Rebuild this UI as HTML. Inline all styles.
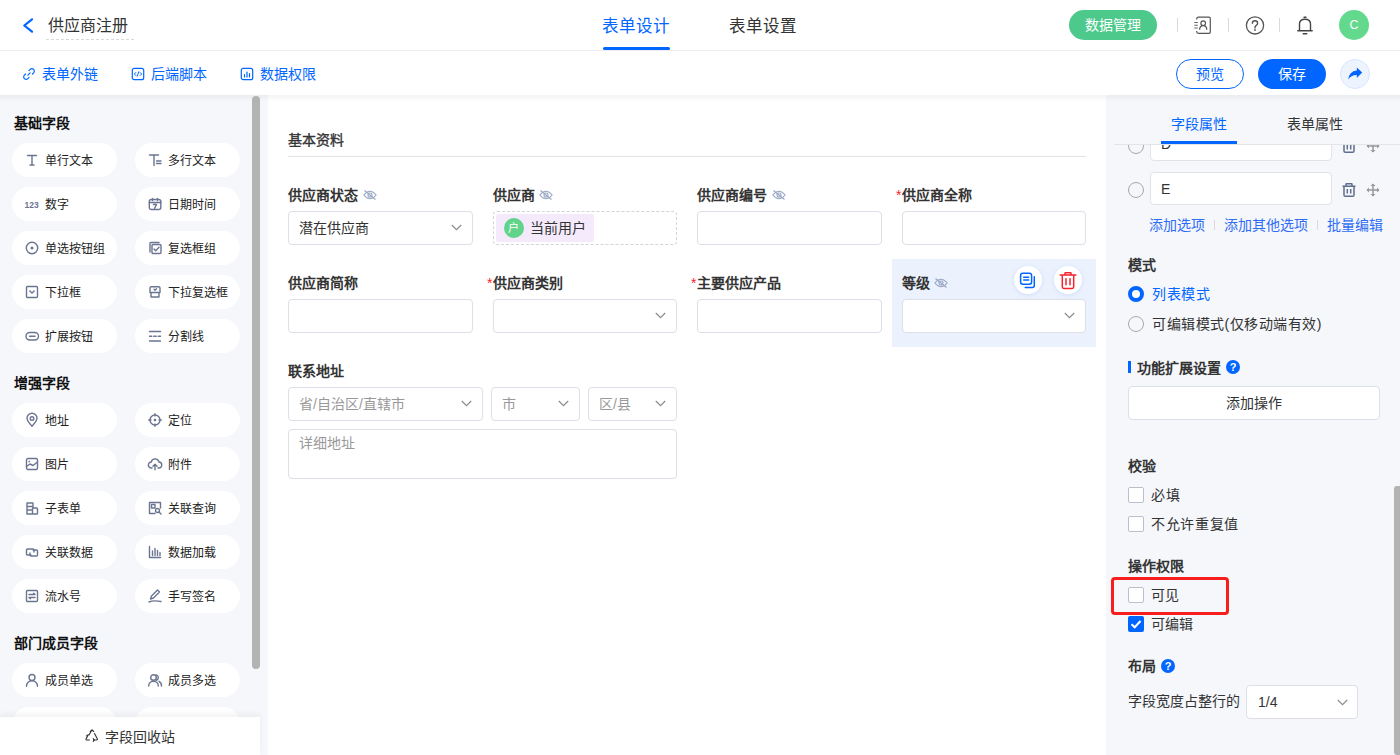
<!DOCTYPE html>
<html lang="zh-CN">
<head>
<meta charset="utf-8">
<style>
*{margin:0;padding:0;box-sizing:border-box}
html,body{width:1400px;height:755px;overflow:hidden;background:#fff}
body{font-family:"Liberation Sans",sans-serif;font-size:14px;color:#333;position:relative}
.a{position:absolute}
.t{position:absolute;white-space:nowrap;line-height:20px}
svg{position:absolute;overflow:visible}
/* header */
#hdr{left:0;top:0;width:1400px;height:51px;border-bottom:1px solid #ececec}
#tb{left:0;top:51px;width:1400px;height:44px;background:#fff}
#lp{left:0;top:95px;width:268px;height:660px;background:#f5f7fb}
#cv{left:268px;top:95px;width:838px;height:660px;background:#fff}
#rp{left:1106px;top:95px;width:294px;height:660px;background:#f5f7fb}
#shadow{left:0;top:95px;width:1400px;height:7px;background:linear-gradient(rgba(0,0,0,0.045),rgba(0,0,0,0))}
.pill{position:absolute;width:105px;height:34px;border-radius:17px;background:#fff}
.pt{font-size:12px;color:#222}
.sec{position:absolute;left:14px;font-size:14px;font-weight:bold;color:#111;line-height:20px}
.lbl{position:absolute;font-size:14px;font-weight:bold;color:#333;line-height:20px;white-space:nowrap}
.inp{position:absolute;width:185px;height:34px;border:1px solid #dcdfe6;border-radius:4px;background:#fff}
.req{color:#f5222d;font-weight:normal}
.blue{color:#0066ff}
</style>
</head>
<body>
<div id="hdr" class="a"></div>
<div id="tb" class="a"></div>
<div id="lp" class="a"></div>
<div id="cv" class="a"></div>
<div id="rp" class="a"></div>
<div id="shadow" class="a"></div>

<!-- HEADER -->
<svg style="left:22px;top:18px" width="12" height="15" viewBox="0 0 12 15"><path d="M10 1.3L2.3 7.5L10 13.7" fill="none" stroke="#0066ff" stroke-width="2.2" stroke-linecap="round" stroke-linejoin="round"/></svg>
<div class="t" style="left:48px;top:16px;font-size:16px;line-height:20px;color:#333">供应商注册</div>
<div class="a" style="left:46px;top:39px;width:88px;height:1px;border-top:1px dashed #d9d9d9"></div>

<div class="t" style="left:602px;top:16px;font-size:16.5px;color:#0066ff">表单设计</div>
<div class="a" style="left:603px;top:47px;width:67px;height:3px;border-radius:2px;background:#0066ff"></div>
<div class="t" style="left:729px;top:16px;font-size:16.5px;color:#333">表单设置</div>

<div class="a" style="left:1069px;top:10px;width:88px;height:30px;border-radius:15px;background:#4cc98b"></div>
<div class="t" style="left:1085px;top:15px;color:#fff">数据管理</div>
<div class="a" style="left:1177px;top:18px;width:1px;height:14px;background:#dadada"></div>
<div class="a" style="left:1228px;top:18px;width:1px;height:14px;background:#dadada"></div>
<div class="a" style="left:1279px;top:18px;width:1px;height:14px;background:#dadada"></div>
<div class="a" style="left:1339px;top:10px;width:30px;height:30px;border-radius:15px;background:#62d98c"></div>
<div class="t" style="left:1339px;top:15px;width:30px;text-align:center;color:#fff;font-size:12.5px">C</div>

<!-- TOOLBAR -->
<div class="t blue" style="left:42px;top:64px">表单外链</div>
<div class="t blue" style="left:151px;top:64px">后端脚本</div>
<div class="t blue" style="left:260px;top:64px">数据权限</div>

<div class="a" style="left:1176px;top:59px;width:68px;height:30px;border-radius:15px;border:1px solid #0066ff;background:#fff"></div>
<div class="t blue" style="left:1196px;top:64px">预览</div>
<div class="a" style="left:1258px;top:59px;width:68px;height:30px;border-radius:15px;background:#0066ff"></div>
<div class="t" style="left:1278px;top:64px;color:#fff">保存</div>
<div class="a" style="left:1340px;top:59px;width:30px;height:30px;border-radius:15px;background:#eef4ff;border:1px solid #d8e5fd"></div>


<!-- LEFT PANEL -->
<div class="sec" style="top:113px">基础字段</div>
<div class="sec" style="top:373px">增强字段</div>
<div class="sec" style="top:633px">部门成员字段</div>
<div class="pill" style="left:12px;top:143px"></div>
<svg style="left:25px;top:153px" width="14" height="14" viewBox="0 0 14 14"><path d="M2.5 2.5h9M7 2.5v9.5M5 12h4" stroke="#6b7591" stroke-width="1.4" fill="none" stroke-linecap="round" stroke-linejoin="round"/></svg>
<div class="t pt" style="left:45px;top:151px">单行文本</div>
<div class="pill" style="left:135px;top:143px"></div>
<svg style="left:148px;top:153px" width="14" height="14" viewBox="0 0 14 14"><path d="M1.5 2h9M6 2v10.5M8.5 8h4.5M8.5 10.5h4.5" stroke="#6b7591" stroke-width="1.4" fill="none" stroke-linecap="round" stroke-linejoin="round"/></svg>
<div class="t pt" style="left:168px;top:151px">多行文本</div>
<div class="pill" style="left:12px;top:187px"></div>
<svg style="left:25px;top:197px" width="14" height="14" viewBox="0 0 14 14"><text x="-0.5" y="10.5" font-family="Liberation Sans" font-weight="bold" font-size="8.5" fill="#6b7591">123</text></svg>
<div class="t pt" style="left:45px;top:195px">数字</div>
<div class="pill" style="left:135px;top:187px"></div>
<svg style="left:148px;top:197px" width="14" height="14" viewBox="0 0 14 14"><rect x="1.3" y="2.5" width="11.5" height="10" rx="2" stroke="#6b7591" stroke-width="1.4" fill="none" stroke-linecap="round" stroke-linejoin="round"/><path d="M1.3 5.5h11.5M4.5 1.5v2M9.5 1.5v2M5.5 7.5h3l-2 4" stroke="#6b7591" stroke-width="1.4" fill="none" stroke-linecap="round" stroke-linejoin="round"/></svg>
<div class="t pt" style="left:168px;top:195px">日期时间</div>
<div class="pill" style="left:12px;top:231px"></div>
<svg style="left:25px;top:241px" width="14" height="14" viewBox="0 0 14 14"><circle cx="7" cy="7" r="5.7" stroke="#6b7591" stroke-width="1.4" fill="none" stroke-linecap="round" stroke-linejoin="round"/><circle cx="7" cy="7" r="1.5" fill="#6b7591"/></svg>
<div class="t pt" style="left:45px;top:239px">单选按钮组</div>
<div class="pill" style="left:135px;top:231px"></div>
<svg style="left:148px;top:241px" width="14" height="14" viewBox="0 0 14 14"><path d="M2 11V2.5q0-1 1-1h8" stroke="#6b7591" stroke-width="1.4" fill="none" stroke-linecap="round" stroke-linejoin="round"/><rect x="4" y="3.5" width="9" height="9" rx="1" stroke="#6b7591" stroke-width="1.4" fill="none" stroke-linecap="round" stroke-linejoin="round"/><path d="M6 8l1.7 1.7L11 6.3" stroke="#6b7591" stroke-width="1.4" fill="none" stroke-linecap="round" stroke-linejoin="round"/></svg>
<div class="t pt" style="left:168px;top:239px">复选框组</div>
<div class="pill" style="left:12px;top:275px"></div>
<svg style="left:25px;top:285px" width="14" height="14" viewBox="0 0 14 14"><rect x="1.5" y="1.5" width="11" height="11" rx="1" stroke="#6b7591" stroke-width="1.4" fill="none" stroke-linecap="round" stroke-linejoin="round"/><path d="M4.8 6l2.2 2 2.2-2" stroke="#6b7591" stroke-width="1.4" fill="none" stroke-linecap="round" stroke-linejoin="round"/></svg>
<div class="t pt" style="left:45px;top:283px">下拉框</div>
<div class="pill" style="left:135px;top:275px"></div>
<svg style="left:148px;top:285px" width="14" height="14" viewBox="0 0 14 14"><path d="M2 7.5V3q0-1.3 1.3-1.3h7.4Q12 1.7 12 3v4.5zM3 7.5v4.5h8v-4.5M6 4.2l1 1 1.5-1.5" stroke="#6b7591" stroke-width="1.4" fill="none" stroke-linecap="round" stroke-linejoin="round"/></svg>
<div class="t pt" style="left:168px;top:283px">下拉复选框</div>
<div class="pill" style="left:12px;top:319px"></div>
<svg style="left:25px;top:329px" width="14" height="14" viewBox="0 0 14 14"><rect x="1" y="3.5" width="12.5" height="7.5" rx="3.75" stroke="#6b7591" stroke-width="1.4" fill="none" stroke-linecap="round" stroke-linejoin="round"/><path d="M4.5 7.25h5.5" stroke="#6b7591" stroke-width="1.4" fill="none" stroke-linecap="round" stroke-linejoin="round"/></svg>
<div class="t pt" style="left:45px;top:327px">扩展按钮</div>
<div class="pill" style="left:135px;top:319px"></div>
<svg style="left:148px;top:329px" width="14" height="14" viewBox="0 0 14 14"><path d="M1.5 2.5h11M1.5 12h11M1.5 7.2h2.3M5.8 7.2h2.4M10.2 7.2h2.3" stroke="#6b7591" stroke-width="1.4" fill="none" stroke-linecap="round" stroke-linejoin="round"/></svg>
<div class="t pt" style="left:168px;top:327px">分割线</div>
<div class="pill" style="left:12px;top:403px"></div>
<svg style="left:25px;top:413px" width="14" height="14" viewBox="0 0 14 14"><path d="M7 13.2C3.5 9.5 2 7.3 2 5.3a5 5 0 0 1 10 0c0 2-1.5 4.2-5 7.9z" stroke="#6b7591" stroke-width="1.4" fill="none" stroke-linecap="round" stroke-linejoin="round"/><circle cx="7" cy="5.5" r="1.8" stroke="#6b7591" stroke-width="1.4" fill="none" stroke-linecap="round" stroke-linejoin="round"/></svg>
<div class="t pt" style="left:45px;top:411px">地址</div>
<div class="pill" style="left:135px;top:403px"></div>
<svg style="left:148px;top:413px" width="14" height="14" viewBox="0 0 14 14"><circle cx="7" cy="7" r="5" stroke="#6b7591" stroke-width="1.4" fill="none" stroke-linecap="round" stroke-linejoin="round"/><circle cx="7" cy="7" r="1.3" fill="#6b7591"/><path d="M7 0.8v2.2M7 11v2.2M0.8 7h2.2M11 7h2.2" stroke="#6b7591" stroke-width="1.4" fill="none" stroke-linecap="round" stroke-linejoin="round"/></svg>
<div class="t pt" style="left:168px;top:411px">定位</div>
<div class="pill" style="left:12px;top:447px"></div>
<svg style="left:25px;top:457px" width="14" height="14" viewBox="0 0 14 14"><rect x="1.5" y="1.5" width="11" height="11" rx="1.5" stroke="#6b7591" stroke-width="1.4" fill="none" stroke-linecap="round" stroke-linejoin="round"/><path d="M1.5 9.5l3.5-2.5 3 1.5 4.5-3.5M4 4.5h0.5" stroke="#6b7591" stroke-width="1.4" fill="none" stroke-linecap="round" stroke-linejoin="round"/></svg>
<div class="t pt" style="left:45px;top:455px">图片</div>
<div class="pill" style="left:135px;top:447px"></div>
<svg style="left:148px;top:457px" width="14" height="14" viewBox="0 0 14 14"><path d="M4 11H3.5a3 3 0 0 1-0.3-6A4 4 0 0 1 11 5a3 3 0 0 1-0.5 6H10M7 12.8V7.5M5 9.3l2-2 2 2" stroke="#6b7591" stroke-width="1.4" fill="none" stroke-linecap="round" stroke-linejoin="round"/></svg>
<div class="t pt" style="left:168px;top:455px">附件</div>
<div class="pill" style="left:12px;top:491px"></div>
<svg style="left:25px;top:501px" width="14" height="14" viewBox="0 0 14 14"><path d="M8 7V2H2v11h5M2 5.5h6M2 9h5" stroke="#6b7591" stroke-width="1.4" fill="none" stroke-linecap="round" stroke-linejoin="round"/><rect x="7.5" y="7" width="5" height="6" rx="0.8" stroke="#6b7591" stroke-width="1.4" fill="none" stroke-linecap="round" stroke-linejoin="round"/></svg>
<div class="t pt" style="left:45px;top:499px">子表单</div>
<div class="pill" style="left:135px;top:491px"></div>
<svg style="left:148px;top:501px" width="14" height="14" viewBox="0 0 14 14"><path d="M12.5 7V1.5h-11v11H7" stroke="#6b7591" stroke-width="1.4" fill="none" stroke-linecap="round" stroke-linejoin="round"/><path d="M3.5 3.5h3.5v3.5H3.5z" stroke="#6b7591" stroke-width="1.4" fill="none" stroke-linecap="round" stroke-linejoin="round"/><circle cx="9.5" cy="9.5" r="2" stroke="#6b7591" stroke-width="1.4" fill="none" stroke-linecap="round" stroke-linejoin="round"/><path d="M11 11l2 2" stroke="#6b7591" stroke-width="1.4" fill="none" stroke-linecap="round" stroke-linejoin="round"/></svg>
<div class="t pt" style="left:168px;top:499px">关联查询</div>
<div class="pill" style="left:12px;top:535px"></div>
<svg style="left:25px;top:545px" width="14" height="14" viewBox="0 0 14 14"><path d="M6 10H2.5q-1 0-1-1V5q0-1 1-1H8q1 0 1 1v2M8 4" stroke="#6b7591" stroke-width="1.4" fill="none" stroke-linecap="round" stroke-linejoin="round"/><path d="M8 5h3.5q1 0 1 1v4q0 1-1 1H6q-1 0-1-1V8" stroke="#6b7591" stroke-width="1.4" fill="none" stroke-linecap="round" stroke-linejoin="round"/></svg>
<div class="t pt" style="left:45px;top:543px">关联数据</div>
<div class="pill" style="left:135px;top:535px"></div>
<svg style="left:148px;top:545px" width="14" height="14" viewBox="0 0 14 14"><path d="M1.5 1.5v11h11M4.5 6v4.5M7 3.5v7M9.5 5.5v5M12 7.5v3" stroke="#6b7591" stroke-width="1.4" fill="none" stroke-linecap="round" stroke-linejoin="round"/></svg>
<div class="t pt" style="left:168px;top:543px">数据加载</div>
<div class="pill" style="left:12px;top:579px"></div>
<svg style="left:25px;top:589px" width="14" height="14" viewBox="0 0 14 14"><rect x="1.5" y="1.5" width="11" height="11" rx="1" stroke="#6b7591" stroke-width="1.4" fill="none" stroke-linecap="round" stroke-linejoin="round"/><path d="M4 5.5h6l-1.3-1.2M10 8.5H4l1.3 1.2" stroke="#6b7591" stroke-width="1.4" fill="none" stroke-linecap="round" stroke-linejoin="round"/></svg>
<div class="t pt" style="left:45px;top:587px">流水号</div>
<div class="pill" style="left:135px;top:579px"></div>
<svg style="left:148px;top:589px" width="14" height="14" viewBox="0 0 14 14"><path d="M2.5 10l1-3 6-6 2 2-6 6zM1 13c3-1.5 6-1.5 12-0.5" stroke="#6b7591" stroke-width="1.4" fill="none" stroke-linecap="round" stroke-linejoin="round"/></svg>
<div class="t pt" style="left:168px;top:587px">手写签名</div>
<div class="pill" style="left:12px;top:663px"></div>
<svg style="left:25px;top:673px" width="14" height="14" viewBox="0 0 14 14"><circle cx="7" cy="4.5" r="3" stroke="#6b7591" stroke-width="1.4" fill="none" stroke-linecap="round" stroke-linejoin="round"/><path d="M1.5 13.2a5.5 5.5 0 0 1 11 0" stroke="#6b7591" stroke-width="1.4" fill="none" stroke-linecap="round" stroke-linejoin="round"/></svg>
<div class="t pt" style="left:45px;top:671px">成员单选</div>
<div class="pill" style="left:135px;top:663px"></div>
<svg style="left:148px;top:673px" width="14" height="14" viewBox="0 0 14 14"><circle cx="5.5" cy="4.5" r="2.8" stroke="#6b7591" stroke-width="1.4" fill="none" stroke-linecap="round" stroke-linejoin="round"/><path d="M0.7 13a4.8 4.8 0 0 1 9.6 0M8.3 1.8a2.8 2.8 0 0 1 0 5.4M11 8.3a4.8 4.8 0 0 1 2.5 4.7" stroke="#6b7591" stroke-width="1.4" fill="none" stroke-linecap="round" stroke-linejoin="round"/></svg>
<div class="t pt" style="left:168px;top:671px">成员多选</div>
<div class="pill" style="left:12px;top:707px"></div>
<div class="pill" style="left:135px;top:707px"></div>
<div class="a" style="left:252px;top:96px;width:8px;height:573px;border-radius:4px;background:#b3b3b3"></div>
<div class="a" style="left:0;top:717px;width:260px;height:38px;background:#fff;box-shadow:0 -3px 6px rgba(0,0,0,0.05)"></div>
<svg style="left:85px;top:729px" width="14" height="14" viewBox="0 0 14 14"><path d="M5.3 2.5L7 0.8l1.7 1.7M7 0.8L4 6M9.5 4.5l2.8 5.3q0.5 1.2-1 1.2H8.5M9.5 11l-1.3-1.3M8.2 12.3L9.5 11M4.5 11H2q-1.5 0-0.8-1.4L2.6 7.2M1.3 6.8l1.3 0.4 0.4-1.6" stroke="#333" stroke-width="1.1" fill="none" stroke-linecap="round" stroke-linejoin="round"/></svg>
<div class="t" style="left:105px;top:727px;color:#333">字段回收站</div>


<!-- CANVAS -->
<div class="t" style="left:288px;top:130px;color:#333;-webkit-text-stroke:0.35px #333">基本资料</div>
<div class="a" style="left:288px;top:156px;width:798px;height:1px;background:#e3e3e3"></div>

<div class="lbl" style="left:288px;top:185px">供应商状态</div><svg style="left:363px;top:190px" width="14" height="10" viewBox="0 0 14 10"><path d="M0.8 5Q7-2.5 13.2 5Q7 12.5 0.8 5z" fill="none" stroke="#9aa8c4" stroke-width="1.1"/><circle cx="7" cy="5" r="2" fill="none" stroke="#9aa8c4" stroke-width="1.1"/><path d="M1.5 0.5L12.5 9.5" stroke="#9aa8c4" stroke-width="1.1"/></svg>
<div class="inp" style="left:288px;top:211px"></div>
<div class="t" style="left:299px;top:218px;color:#333">潜在供应商</div><svg style="left:451px;top:224px" width="11" height="7" viewBox="0 0 11 7"><path d="M0.8 1L5.5 5.7L10.2 1" fill="none" stroke="#8c8c8c" stroke-width="1.2"/></svg>

<div class="lbl" style="left:493px;top:185px">供应商</div><svg style="left:539px;top:190px" width="14" height="10" viewBox="0 0 14 10"><path d="M0.8 5Q7-2.5 13.2 5Q7 12.5 0.8 5z" fill="none" stroke="#9aa8c4" stroke-width="1.1"/><circle cx="7" cy="5" r="2" fill="none" stroke="#9aa8c4" stroke-width="1.1"/><path d="M1.5 0.5L12.5 9.5" stroke="#9aa8c4" stroke-width="1.1"/></svg>
<div class="a" style="left:493px;top:211px;width:184px;height:34px;border:1px dashed #d4d4d4;border-radius:4px"></div>
<div class="a" style="left:496px;top:214px;width:98px;height:28px;border-radius:2px;background:#f5e9fc"></div>
<div class="a" style="left:504px;top:218px;width:20px;height:20px;border-radius:10px;background:#62d38a"></div>
<div class="t" style="left:508px;top:218px;color:#fff;font-size:11px">户</div>
<div class="t" style="left:530px;top:218px;color:#333">当前用户</div>

<div class="lbl" style="left:697px;top:185px">供应商编号</div><svg style="left:772px;top:190px" width="14" height="10" viewBox="0 0 14 10"><path d="M0.8 5Q7-2.5 13.2 5Q7 12.5 0.8 5z" fill="none" stroke="#9aa8c4" stroke-width="1.1"/><circle cx="7" cy="5" r="2" fill="none" stroke="#9aa8c4" stroke-width="1.1"/><path d="M1.5 0.5L12.5 9.5" stroke="#9aa8c4" stroke-width="1.1"/></svg>
<div class="inp" style="left:697px;top:211px"></div>

<div class="lbl" style="left:902px;top:185px"><span class="req" style="position:absolute;left:-6px">*</span>供应商全称</div>
<div class="inp" style="left:902px;top:211px;width:184px"></div>

<div class="lbl" style="left:288px;top:273px">供应商简称</div>
<div class="inp" style="left:288px;top:299px"></div>

<div class="lbl" style="left:493px;top:273px"><span class="req" style="position:absolute;left:-6px">*</span>供应商类别</div>
<div class="inp" style="left:493px;top:299px;width:184px"></div><svg style="left:655px;top:312px" width="11" height="7" viewBox="0 0 11 7"><path d="M0.8 1L5.5 5.7L10.2 1" fill="none" stroke="#8c8c8c" stroke-width="1.2"/></svg>

<div class="lbl" style="left:697px;top:273px"><span class="req" style="position:absolute;left:-6px">*</span>主要供应产品</div>
<div class="inp" style="left:697px;top:299px"></div>

<div class="a" style="left:892px;top:259px;width:204px;height:88px;background:#ebf2fe"></div>
<div class="lbl" style="left:902px;top:273px">等级</div><svg style="left:934px;top:278px" width="14" height="10" viewBox="0 0 14 10"><path d="M0.8 5Q7-2.5 13.2 5Q7 12.5 0.8 5z" fill="none" stroke="#9aa8c4" stroke-width="1.1"/><circle cx="7" cy="5" r="2" fill="none" stroke="#9aa8c4" stroke-width="1.1"/><path d="M1.5 0.5L12.5 9.5" stroke="#9aa8c4" stroke-width="1.1"/></svg>
<div class="inp" style="left:902px;top:299px;width:184px"></div><svg style="left:1064px;top:312px" width="11" height="7" viewBox="0 0 11 7"><path d="M0.8 1L5.5 5.7L10.2 1" fill="none" stroke="#8c8c8c" stroke-width="1.2"/></svg>
<div class="a" style="left:1014px;top:266px;width:28px;height:28px;border-radius:14px;background:#fff;box-shadow:0 1px 4px rgba(60,110,220,0.15)"></div>
<svg style="left:1019px;top:272px" width="18" height="18" viewBox="0 0 18 18"><rect x="1.6" y="1.3" width="11" height="11" rx="2.2" fill="none" stroke="#0066ff" stroke-width="1.5"/><path d="M4.7 5.2h5M4.7 8h5" stroke="#0066ff" stroke-width="1.5" stroke-linecap="round"/><path d="M15.3 4.8v8.7q0 2-2 2H6.2" fill="none" stroke="#0066ff" stroke-width="1.5" stroke-linecap="round"/></svg>
<div class="a" style="left:1054px;top:266px;width:28px;height:28px;border-radius:14px;background:#fff;box-shadow:0 1px 4px rgba(60,110,220,0.15)"></div>
<svg style="left:1059px;top:272px" width="18" height="18" viewBox="0 0 18 18"><path d="M1.2 3h15.6M6 3V1.3q0-0.6 0.6-0.6h4.8q0.6 0 0.6 0.6V3M3.3 4v10.8q0 1.6 1.6 1.6h8.2q1.6 0 1.6-1.6V4M7 6.8v6M11 6.8v6" fill="none" stroke="#f5222d" stroke-width="1.5" stroke-linecap="round"/></svg>

<div class="lbl" style="left:288px;top:361px">联系地址</div>
<div class="inp" style="left:288px;top:387px;width:195px"></div>
<div class="t" style="left:299px;top:394px;color:#999">省/自治区/直辖市</div><svg style="left:461px;top:400px" width="11" height="7" viewBox="0 0 11 7"><path d="M0.8 1L5.5 5.7L10.2 1" fill="none" stroke="#8c8c8c" stroke-width="1.2"/></svg>
<div class="inp" style="left:491px;top:387px;width:89px"></div>
<div class="t" style="left:502px;top:394px;color:#999">市</div><svg style="left:558px;top:400px" width="11" height="7" viewBox="0 0 11 7"><path d="M0.8 1L5.5 5.7L10.2 1" fill="none" stroke="#8c8c8c" stroke-width="1.2"/></svg>
<div class="inp" style="left:588px;top:387px;width:89px"></div>
<div class="t" style="left:599px;top:394px;color:#999">区/县</div><svg style="left:655px;top:400px" width="11" height="7" viewBox="0 0 11 7"><path d="M0.8 1L5.5 5.7L10.2 1" fill="none" stroke="#8c8c8c" stroke-width="1.2"/></svg>
<div class="inp" style="left:288px;top:429px;width:389px;height:50px"></div>
<div class="t" style="left:299px;top:433px;color:#999">详细地址</div>


<!-- RIGHT PANEL -->
<div class="a" style="left:1150px;top:128px;width:182px;height:33px;border:1px solid #e1e3e8;border-radius:4px;background:#fff"></div>
<div class="t" style="left:1161px;top:134px;color:#333">D</div>
<div class="a" style="left:1128px;top:138px;width:16px;height:16px;border:1px solid #a8a8a8;border-radius:8px"></div>
<svg style="left:1342px;top:139px" width="14" height="14" viewBox="0 0 14 14"><path d="M0.5 3.2h13M4 3.2V1.3q0-0.5 0.5-0.5h5q0.5 0 0.5 0.5v1.9M2 3.5v8.5q0 1.3 1.3 1.3h7.4q1.3 0 1.3-1.3V3.5M5.3 6v4.5M8.7 6v4.5" fill="none" stroke="#5f6e8c" stroke-width="1.5"/></svg><svg style="left:1366px;top:139px" width="14" height="14" viewBox="0 0 14 14"><path d="M7 1v12M1 7h12" stroke="#999" stroke-width="1.5"/><path d="M4.5 3L7 0.5L9.5 3zM4.5 11L7 13.5L9.5 11zM3 4.5L0.5 7L3 9.5zM11 4.5L13.5 7L11 9.5z" fill="#999"/></svg>
<div class="a" style="left:1106px;top:103px;width:294px;height:41px;background:#f5f7fb"></div>
<div class="t" style="left:1171px;top:114px;color:#0066ff">字段属性</div>
<div class="t" style="left:1287px;top:114px;color:#333">表单属性</div>
<div class="a" style="left:1114px;top:144px;width:286px;height:1px;background:#e2e4e8"></div>
<div class="a" style="left:1161px;top:141px;width:76px;height:3px;background:#0066ff"></div>

<div class="a" style="left:1128px;top:182px;width:16px;height:16px;border:1px solid #a8a8a8;border-radius:8px"></div>
<div class="a" style="left:1150px;top:172px;width:182px;height:33px;border:1px solid #e1e3e8;border-radius:4px;background:#fff"></div>
<div class="t" style="left:1161px;top:179px;color:#333">E</div>
<svg style="left:1342px;top:183px" width="14" height="14" viewBox="0 0 14 14"><path d="M0.5 3.2h13M4 3.2V1.3q0-0.5 0.5-0.5h5q0.5 0 0.5 0.5v1.9M2 3.5v8.5q0 1.3 1.3 1.3h7.4q1.3 0 1.3-1.3V3.5M5.3 6v4.5M8.7 6v4.5" fill="none" stroke="#5f6e8c" stroke-width="1.5"/></svg><svg style="left:1366px;top:183px" width="14" height="14" viewBox="0 0 14 14"><path d="M7 1v12M1 7h12" stroke="#999" stroke-width="1.5"/><path d="M4.5 3L7 0.5L9.5 3zM4.5 11L7 13.5L9.5 11zM3 4.5L0.5 7L3 9.5zM11 4.5L13.5 7L11 9.5z" fill="#999"/></svg>

<div class="t" style="left:1149px;top:215px;color:#2f6cf6">添加选项</div>
<div class="a" style="left:1214px;top:220px;width:1px;height:10px;background:#d9d9d9"></div>
<div class="t" style="left:1224px;top:215px;color:#2f6cf6">添加其他选项</div>
<div class="a" style="left:1317px;top:220px;width:1px;height:10px;background:#d9d9d9"></div>
<div class="t" style="left:1327px;top:215px;color:#2f6cf6">批量编辑</div>

<div class="lbl" style="left:1128px;top:255px">模式</div>
<div class="a" style="left:1128px;top:286px;width:16px;height:16px;border:4.5px solid #0066ff;border-radius:8px;background:#fff"></div>
<div class="t" style="left:1152px;top:284px;color:#0066ff;letter-spacing:0.5px">列表模式</div>
<div class="a" style="left:1128px;top:316px;width:16px;height:16px;border:1px solid #a8a8a8;border-radius:8px"></div>
<div class="t" style="left:1152px;top:314px;color:#333;letter-spacing:0.5px">可编辑模式(仅移动端有效)</div>

<div class="a" style="left:1128px;top:361px;width:3px;height:12px;background:#0066ff"></div>
<div class="lbl" style="left:1137px;top:358px">功能扩展设置</div>
<div class="a" style="left:1226px;top:360px;width:14px;height:14px;border-radius:7px;background:#0066ff"></div><div class="t" style="left:1226px;top:357px;width:14px;text-align:center;color:#fff;font-size:11px;font-weight:bold">?</div>
<div class="a" style="left:1128px;top:386px;width:252px;height:34px;border:1px solid #dcdfe6;border-radius:4px;background:#fff"></div>
<div class="t" style="left:1128px;top:393px;width:252px;text-align:center;color:#333">添加操作</div>

<div class="lbl" style="left:1128px;top:456px">校验</div>
<div class="a" style="left:1128px;top:487px;width:16px;height:16px;border:1px solid #b9bfcc;border-radius:2px;background:#fff"></div><div class="t" style="left:1151px;top:485px;color:#333;letter-spacing:1px">必填</div>
<div class="a" style="left:1128px;top:516px;width:16px;height:16px;border:1px solid #b9bfcc;border-radius:2px;background:#fff"></div><div class="t" style="left:1151px;top:514px;color:#333;letter-spacing:0.7px">不允许重复值</div>

<div class="lbl" style="left:1128px;top:556px">操作权限</div>
<div class="a" style="left:1128px;top:587px;width:16px;height:16px;border:1px solid #b9bfcc;border-radius:2px;background:#fff"></div><div class="t" style="left:1151px;top:585px;color:#333">可见</div>
<div class="a" style="left:1111px;top:577px;width:118px;height:38px;border:3px solid #f81e1e;border-radius:4px"></div>
<div class="a" style="left:1128px;top:616px;width:16px;height:16px;border-radius:2px;background:#0066ff"></div>
<svg style="left:1128px;top:616px" width="16" height="16" viewBox="0 0 16 16"><path d="M3.5 8.2L6.7 11.3L12.5 5" fill="none" stroke="#fff" stroke-width="2"/></svg>
<div class="t" style="left:1151px;top:614px;color:#333">可编辑</div>

<div class="lbl" style="left:1128px;top:656px">布局</div>
<div class="a" style="left:1161px;top:659px;width:14px;height:14px;border-radius:7px;background:#0066ff"></div><div class="t" style="left:1161px;top:656px;width:14px;text-align:center;color:#fff;font-size:11px;font-weight:bold">?</div>
<div class="t" style="left:1128px;top:691px;color:#333">字段宽度占整行的</div>
<div class="a" style="left:1246px;top:685px;width:112px;height:34px;border:1px solid #dcdfe6;border-radius:4px;background:#fff"></div>
<div class="t" style="left:1258px;top:692px;color:#333">1/4</div><svg style="left:1337px;top:699px" width="11" height="7" viewBox="0 0 11 7"><path d="M0.8 1L5.5 5.7L10.2 1" fill="none" stroke="#8c8c8c" stroke-width="1.2"/></svg>
<div class="a" style="left:1394px;top:486px;width:6px;height:269px;border-radius:3px 0 0 3px;background:#b3b3b3"></div>


<!-- HEADER ICONS -->
<svg style="left:1193px;top:16px" width="20" height="20" viewBox="0 0 20 20"><path d="M3.7 3.5V3q0-1.8 1.8-1.8h10.5q1.3 0 1.3 1.3v13.6q0 1.3-1.3 1.3H5.5q-1.8 0-1.8-1.8v-0.5" fill="none" stroke="#555" stroke-width="1.2"/><path d="M1.3 6.5h3.5M1.3 9.2h3.5M1.3 12h3.5" stroke="#666" stroke-width="1.1"/><circle cx="10.2" cy="7.2" r="2.3" fill="none" stroke="#555" stroke-width="1.2"/><path d="M6.6 13.8q0-4.2 3.6-4.2t3.6 4.2" fill="none" stroke="#555" stroke-width="1.2"/></svg>
<svg style="left:1245px;top:16px" width="20" height="20" viewBox="0 0 20 20"><circle cx="10" cy="9.4" r="8.6" fill="none" stroke="#555" stroke-width="1.3"/><path d="M7.4 7.3q0-2.6 2.6-2.6t2.6 2.5q0 1.3-1.3 2.1t-1.3 2v0.6" fill="none" stroke="#555" stroke-width="1.4" stroke-linecap="round"/><circle cx="10" cy="14" r="0.9" fill="#555"/></svg>
<svg style="left:1295px;top:15px" width="20" height="20" viewBox="0 0 20 20"><path d="M9 2.3h2M4.5 15.5V9q0-4.8 5.5-4.8T15.5 9v6.5M2.8 15.8h14.4M8.2 18.7h3.6" fill="none" stroke="#444" stroke-width="1.4" stroke-linecap="round"/></svg>
<svg style="left:1348px;top:67px" width="15" height="14" viewBox="0 0 15 14"><path d="M14.2 5.5L8.8 0.5V3.4Q1 4.2 0.3 12.5Q3.2 7.8 8.8 8v3z" fill="#0066ff"/></svg>
<!-- TOOLBAR ICONS -->
<svg style="left:22px;top:67px" width="14" height="14" viewBox="0 0 14 14"><path d="M5.9 8.1L8.1 5.9M7 3.6l1.2-1.2a2.3 2.3 0 0 1 3.4 3.4L10.4 7M7 10.4L5.8 11.6a2.3 2.3 0 0 1-3.4-3.4L3.6 7" fill="none" stroke="#0066ff" stroke-width="1.2" stroke-linecap="round"/></svg>
<svg style="left:131px;top:67px" width="14" height="14" viewBox="0 0 14 14"><rect x="1.3" y="1.3" width="11.4" height="11.4" rx="2" fill="none" stroke="#0066ff" stroke-width="1.2"/><path d="M4.8 5.5L3.3 7l1.5 1.5M9.2 5.5L10.7 7l-1.5 1.5M7.8 4.8L6.2 9.2" fill="none" stroke="#0066ff" stroke-width="1" stroke-linecap="round"/></svg>
<svg style="left:240px;top:67px" width="14" height="14" viewBox="0 0 14 14"><rect x="1.3" y="1.3" width="11.4" height="11.4" rx="2" fill="none" stroke="#0066ff" stroke-width="1.2"/><path d="M4.5 7.5v2.5M7 5v5M9.5 6.5v3.5" fill="none" stroke="#0066ff" stroke-width="1.2" stroke-linecap="round"/></svg>

</body>
</html>
